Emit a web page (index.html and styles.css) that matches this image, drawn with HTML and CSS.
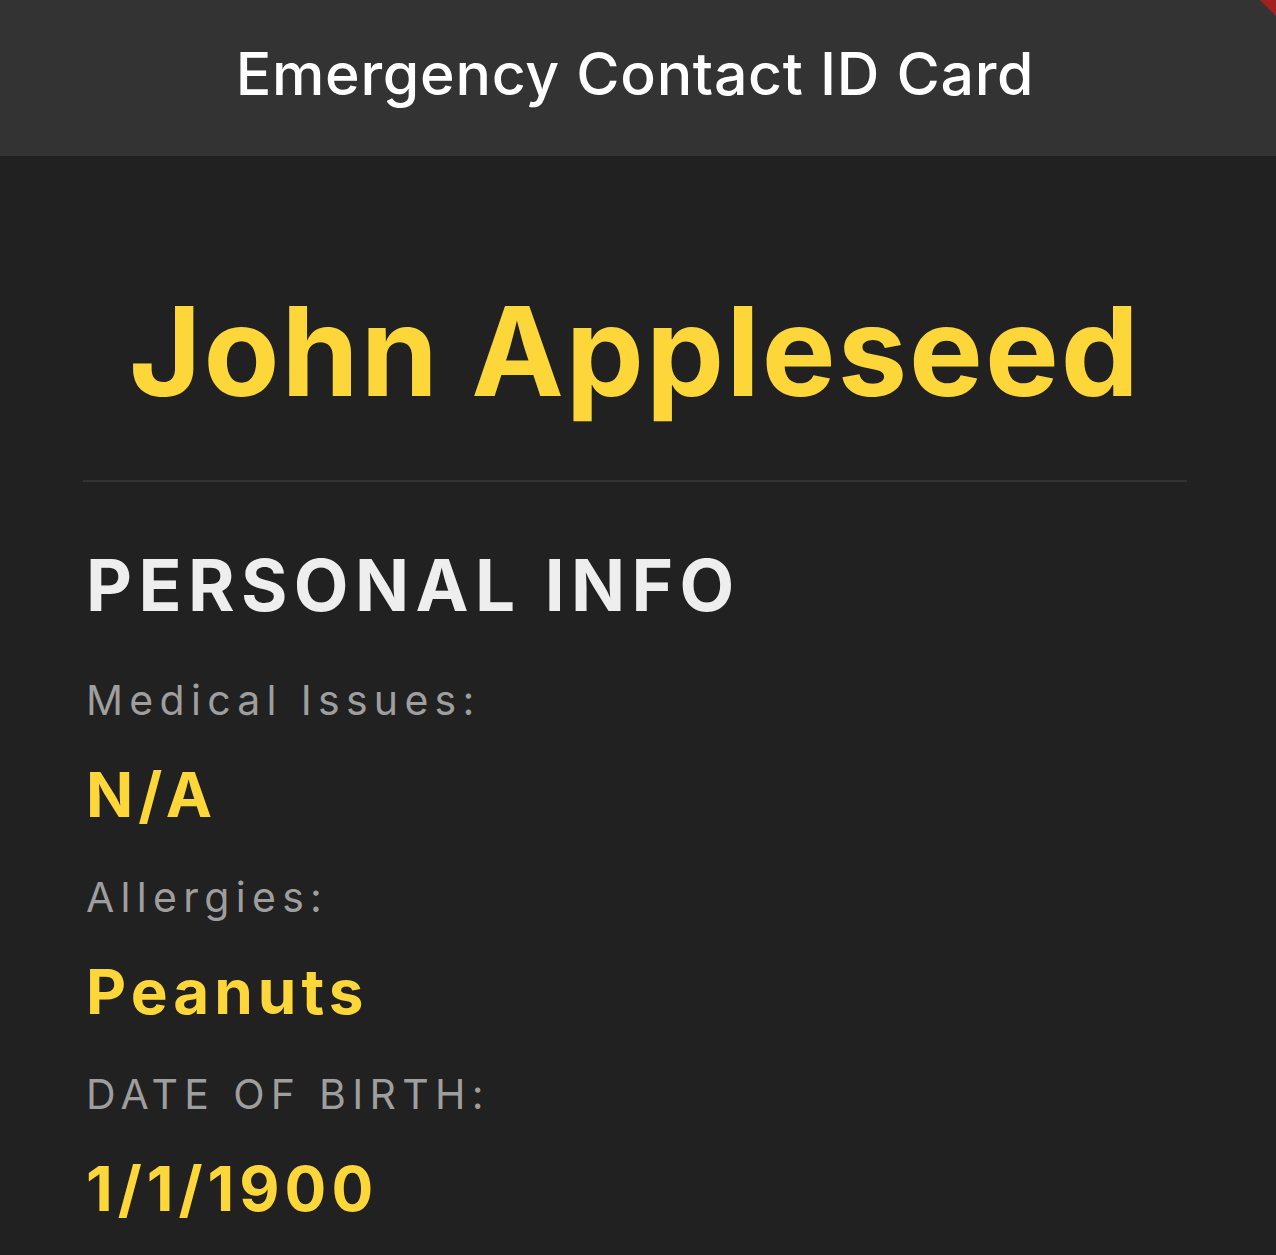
FILE: index.html
```html
<!DOCTYPE html>
<html>
<head>
<meta charset="utf-8">
<link rel="stylesheet" href="styles.css">
</head>
<body>
<header class="appbar">
  <h1 class="appbar-title">Emergency Contact ID Card</h1>
</header>
<main class="content">
  <h2 class="name">John Appleseed</h2>
  <hr class="divider">
  <section class="info">
    <h3 class="section-title">PERSONAL INFO</h3>
    <div class="label">Medical Issues:</div>
    <div class="value">N/A</div>
    <div class="label">Allergies:</div>
    <div class="value">Peanuts</div>
    <div class="label">DATE OF BIRTH:</div>
    <div class="value">1/1/1900</div>
  </section>
</main>
<div class="debug-banner"></div>
</body>
</html>
```
FILE: styles.css
```css
html, body {
  margin: 0;
  padding: 0;
  background: #212121;
  height: 100%;
  overflow: hidden;
  font-family: Inter, "Noto Sans", sans-serif;
}
.appbar {
  height: 156px;
  background: #333333;
  display: flex;
  align-items: center;
  justify-content: center;
}
.appbar-title {
  margin: 0 6px 0 0;
  color: #ffffff;
  font-size: 59px;
  font-weight: 500;
  letter-spacing: 0.7px;
  padding-bottom: 10px;
}
.content {
  padding: 0 89px 0 83px;
}
.name {
  margin: 135px 0 0 0;
  text-align: center;
  color: #fdd73a;
  font-size: 124px;
  font-weight: 700;
  letter-spacing: 2px;
  line-height: 120px;
}
.divider {
  border: 0;
  border-top: 2px solid #333333;
  margin: 69px 0 0 0;
}
.info {
  display: flex;
  flex-direction: column;
  align-items: flex-start;
  padding: 63px 0 0 3px;
}
.section-title {
  margin: 0 0 8px 0;
  color: #eeeeee;
  font-size: 71px;
  font-weight: 700;
  letter-spacing: 6.4px;
  line-height: 80px;
}
.label {
  color: #9e9e9e;
  font-size: 41px;
  font-weight: 400;
  letter-spacing: 6.3px;
  line-height: 50px;
  margin-top: 42px;
}
.value {
  color: #fdd73a;
  font-size: 62px;
  font-weight: 700;
  letter-spacing: 5px;
  line-height: 70px;
  margin-top: 35px;
}
.debug-banner {
  position: absolute;
  top: 0;
  right: 0;
  width: 0;
  height: 0;
  border-top: 16px solid #a32020;
  border-left: 16px solid transparent;
}
```
